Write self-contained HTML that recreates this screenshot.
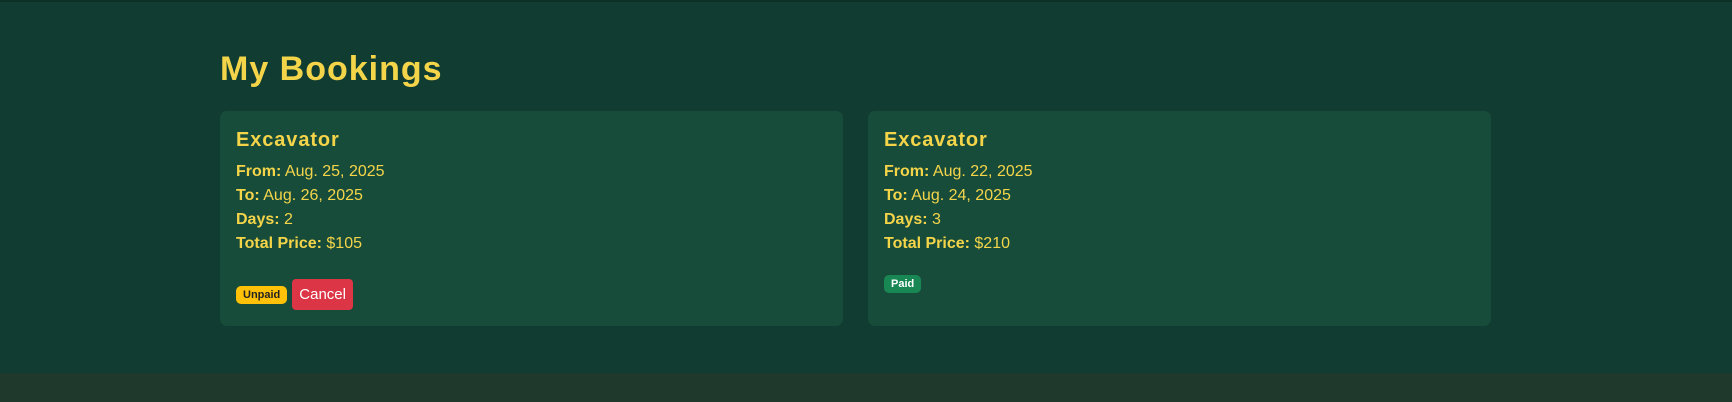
<!DOCTYPE html>
<html><head><style>
*{margin:0;padding:0;box-sizing:border-box}
body{width:1732px;height:402px;background:#103c31;font-family:"Liberation Sans",sans-serif;color:#f4d54a;position:relative;overflow:hidden}
.top{position:absolute;left:0;top:0;width:100%;height:2px;background:#0c2f26}
h1{position:absolute;left:220px;top:50px;font-size:34px;font-weight:bold;letter-spacing:1px}
.card{position:absolute;top:111px;width:623px;height:215px;background:#184c3a;border-radius:7px;padding:18px 16px}
h2{font-size:20px;font-weight:bold;margin-bottom:8px;letter-spacing:0.9px}
p{font-size:16px;line-height:24px}
b{font-weight:bold}
.row{position:absolute;left:16px;display:flex;align-items:center}
.badge{font-size:11px;font-weight:bold;padding:3px 7px;border-radius:5px}
.btn{background:#dc3545;color:#fff;font-size:15px;padding:7px 7px;border-radius:4px;margin-left:5px}
.foot{position:absolute;left:0;top:373px;width:100%;height:29px;background:#1f3a2c}
</style></head><body>
<div class="top"></div>
<h1>My Bookings</h1>
<div class="card" style="left:220px">
<h2>Excavator</h2>
<p><b>From:</b> Aug. 25, 2025</p>
<p><b>To:</b> Aug. 26, 2025</p>
<p><b>Days:</b> 2</p>
<p><b>Total Price:</b> $105</p>
<div class="row" style="top:168px"><span class="badge" style="background:#ffc107;color:#222">Unpaid</span><span class="btn">Cancel</span></div>
</div>
<div class="card" style="left:868px">
<h2>Excavator</h2>
<p><b>From:</b> Aug. 22, 2025</p>
<p><b>To:</b> Aug. 24, 2025</p>
<p><b>Days:</b> 3</p>
<p><b>Total Price:</b> $210</p>
<div class="row" style="top:164px"><span class="badge" style="background:#198754;color:#fff">Paid</span></div>
</div>
<div class="foot"></div>
</body></html>
